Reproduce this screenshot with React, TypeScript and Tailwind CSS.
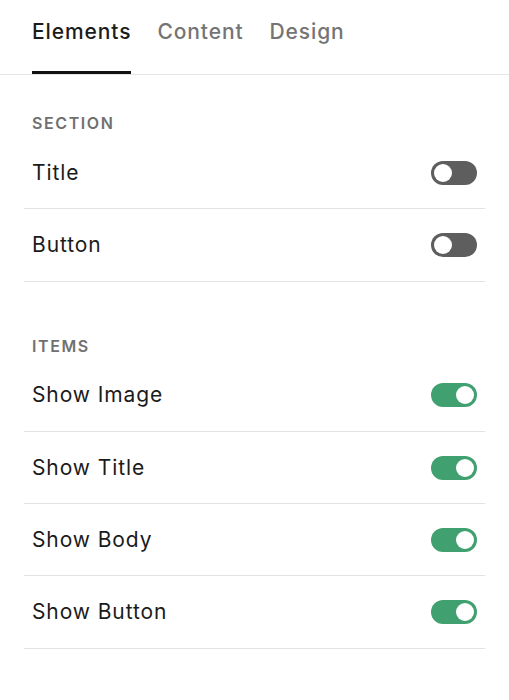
const sections = [
  { label: "Section", rows: [{ name: "Title", on: false }, { name: "Button", on: false }] },
  {
    label: "Items",
    rows: [
      { name: "Show Image", on: true },
      { name: "Show Title", on: true },
      { name: "Show Body", on: true },
      { name: "Show Button", on: true },
    ],
  },
];

function Toggle({ on }: { on: boolean }) {
  return (
    <span
      className={
        on
          ? "flex h-[24px] w-[46px] items-center justify-end rounded-full bg-[#40a070] px-[3px]"
          : "flex h-[24px] w-[46px] items-center justify-start rounded-full bg-[#5e5e5e] px-[3px]"
      }
    >
      <span className="h-[18px] w-[18px] rounded-full bg-white" />
    </span>
  );
}

export default function App() {
  return (
    <div className="min-h-[700px] w-[509px] bg-white text-[#1b1b1b] [font-family:Inter,'Liberation_Sans',sans-serif]">
      {/* Tabs */}
      <div className="flex h-[75px] gap-[26px] border-b border-[#e6e6e6] px-8">
        {["Elements", "Content", "Design"].map((t, i) => (
          <div
            key={t}
            className={
              i === 0
                ? "flex items-start border-b-[3px] border-[#111] pt-[16px] text-[21px] font-medium tracking-[0.9px]"
                : "flex items-start pt-[16px] text-[21px] font-medium tracking-[0.9px] text-[#747474]"
            }
          >
            {t}
          </div>
        ))}
      </div>

      <div className="px-6">
        {sections.map((s, si) => (
          <div key={s.label} className={si === 0 ? "pt-[34px]" : "pt-[50px]"}>
            <div className="flex h-[28px] items-center px-2 text-[16px] font-semibold uppercase tracking-[0.1em] text-[#707070]">
              {s.label}
            </div>
            {s.rows.map((r) => (
              <div
                key={r.name}
                className="flex h-[72.3px] items-center justify-between border-b border-[#e3e3e3] px-2"
              >
                <span className="text-[21px] tracking-[0.9px]">{r.name}</span>
                <Toggle on={r.on} />
              </div>
            ))}
          </div>
        ))}
      </div>
    </div>
  );
}
